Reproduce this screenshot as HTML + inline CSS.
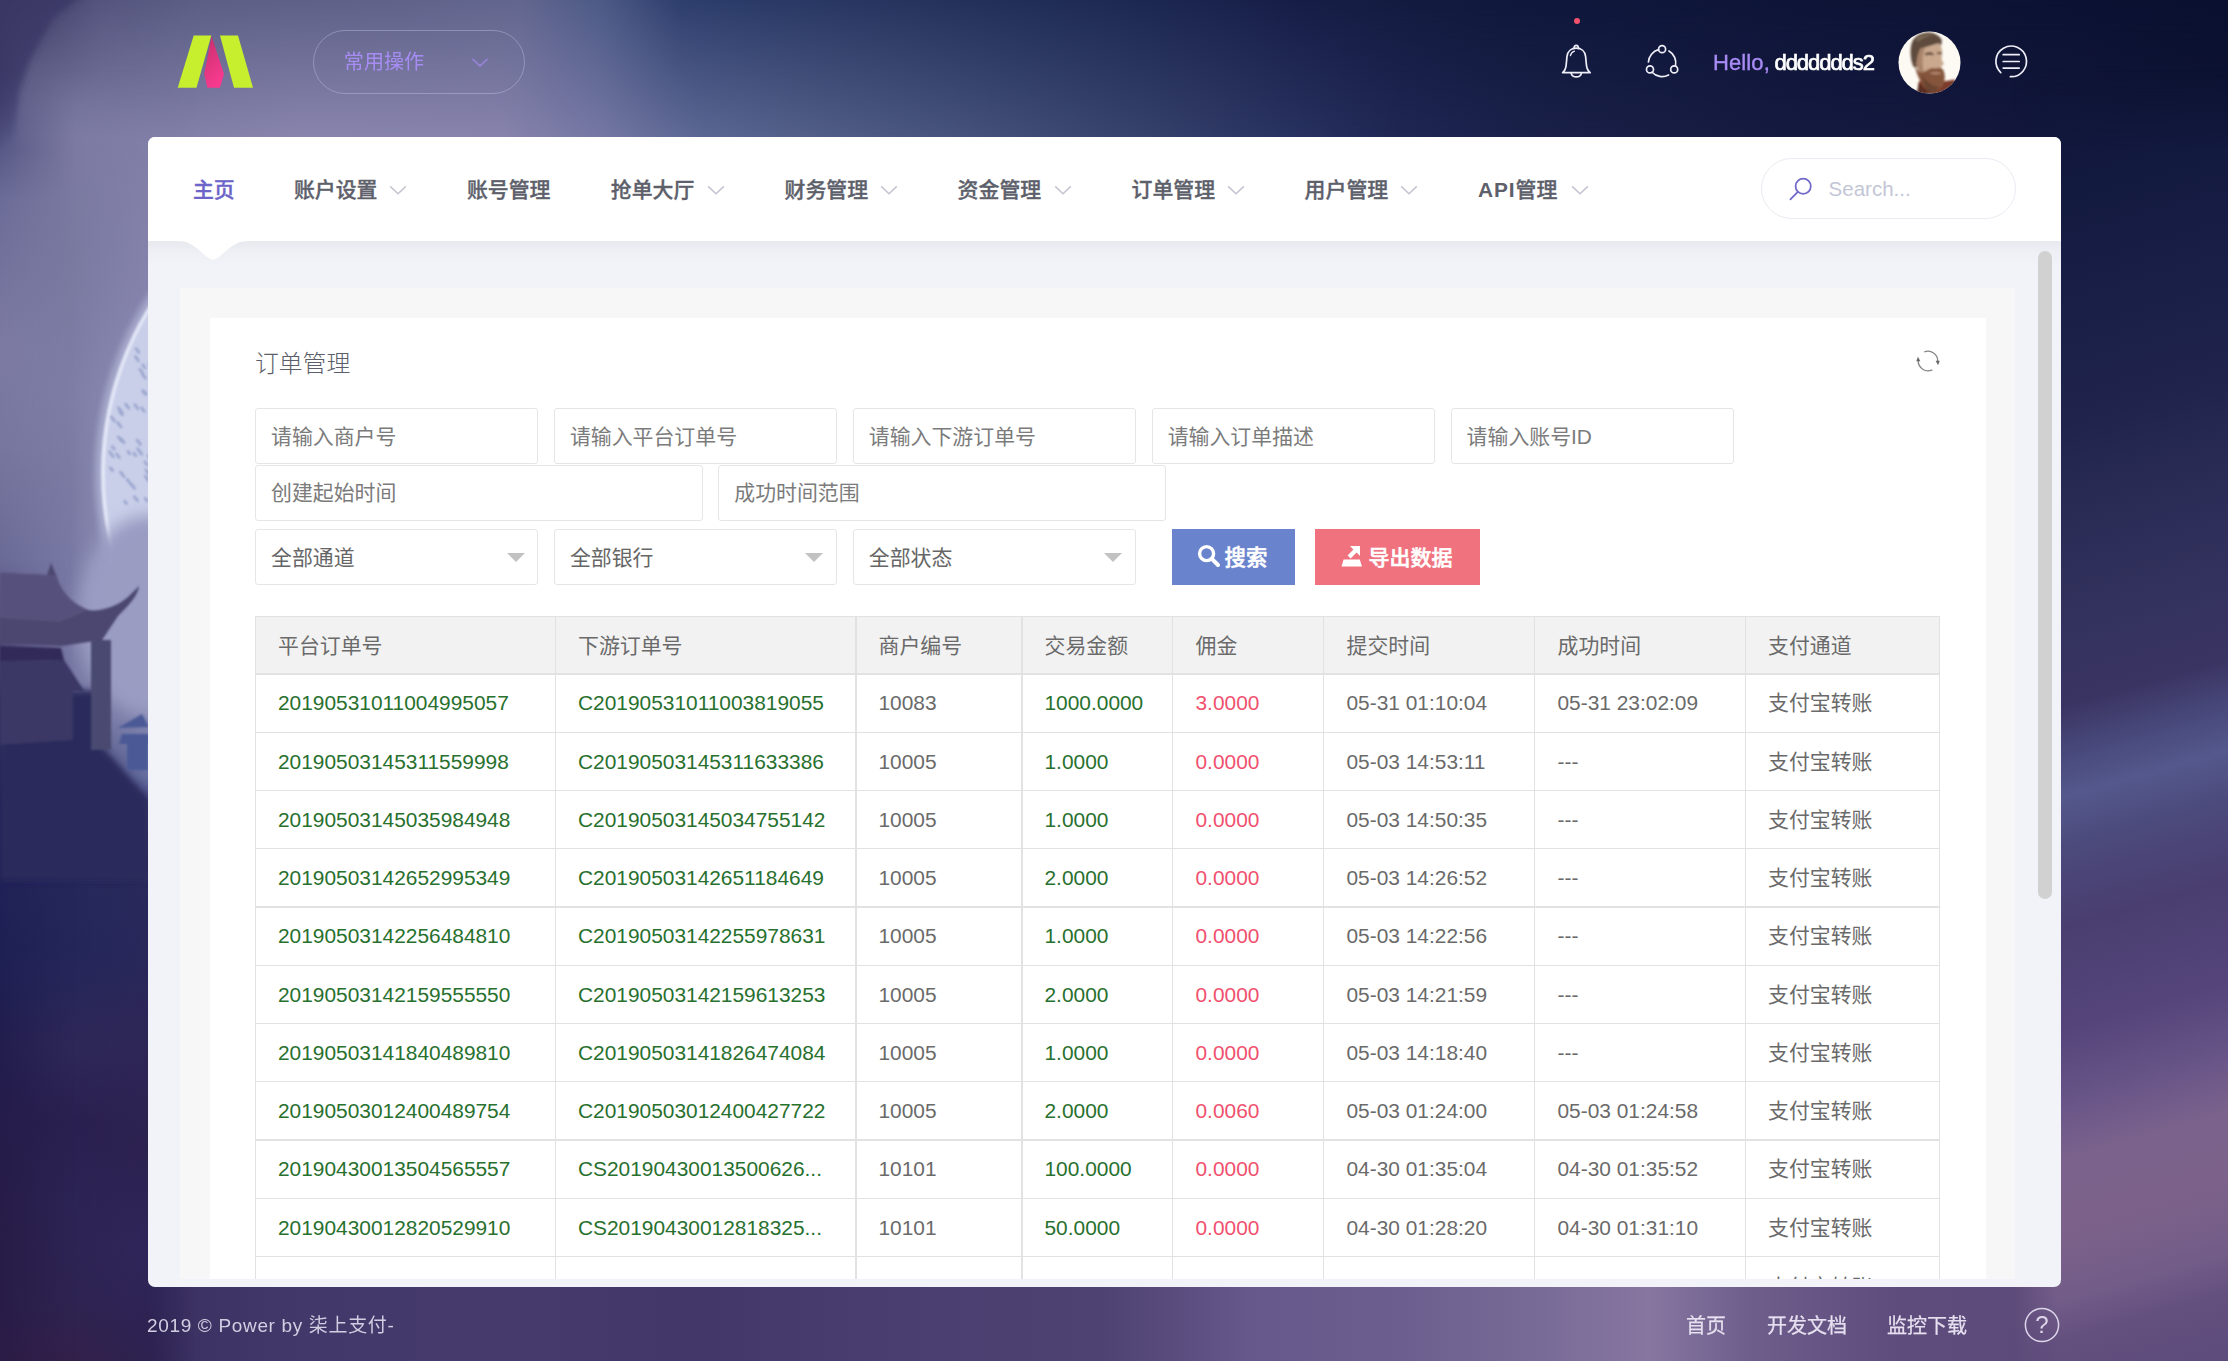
<!DOCTYPE html>
<html lang="zh-CN"><head><meta charset="utf-8"><title>订单管理</title>
<style>
*{box-sizing:border-box;margin:0;padding:0}
html,body{width:2228px;height:1361px;overflow:hidden;background:#1a1c44}
body{position:relative;font-family:"Liberation Sans", "Noto Sans CJK SC", sans-serif;font-size:20.9px;color:#666}
.a{position:absolute;white-space:nowrap}
.t{position:absolute;white-space:nowrap;line-height:30px;height:30px}
#bg{position:absolute;left:0;top:0;width:2228px;height:1361px}
#panel{position:absolute;left:148px;top:137px;width:1913px;height:1150px;background:#f2f3f8;border-radius:7px;overflow:hidden}
#nav{position:absolute;left:0;top:0;width:1913px;height:104px;background:#fff}
#navshadow{position:absolute;left:0;top:104px;width:1913px;height:26px;background:linear-gradient(#e8e9ee,#eff0f5 45%,#f2f3f8)}
.nv{font-weight:500;color:#5d5f6b;font-size:20.9px;-webkit-text-stroke:.35px currentColor}
#frame{position:absolute;left:32px;top:151px;width:1834.5px;height:990.5px;background:#f7f7f8;overflow:hidden}
#card{position:absolute;left:29.5px;top:30px;width:1776px;height:1000px;background:#fff}
.inp{position:absolute;height:56.5px;border:1.5px solid #e6e6e6;background:#fff;border-radius:3px;color:#7b7b7b;line-height:55.3px;padding-left:15px;white-space:nowrap}
.sel{color:#666}
.tri{position:absolute;width:0;height:0;border-left:9px solid transparent;border-right:9px solid transparent;border-top:9px solid #c2c2c2}
.btn{position:absolute;top:391.5px;height:56.5px;color:#fff;font-weight:700;line-height:56.5px;white-space:nowrap}
#tbl{position:absolute;left:106.5px;top:478px;width:1685.5px;height:700px;overflow:hidden}
.hd{position:absolute;left:0;top:0;width:1685px;height:58.2px;background:#f2f2f2}
.hl{position:absolute;left:0;width:1685.2px;height:1.2px;background:#e2e2e2}
.vl{position:absolute;top:0;width:1.2px;height:700px;background:#e2e2e2}
.c{position:absolute;white-space:nowrap;line-height:30px;height:30px;color:#6a6a6a}
.g{color:#28702e}
.r{color:#f0506e}
.ft{color:#d6d3e6;font-size:20px}
</style></head>
<body>
<svg id="bg" width="2228" height="1361" viewBox="0 0 2228 1361"><defs><linearGradient id="tb" gradientUnits="userSpaceOnUse" x1="0" y1="0" x2="2228" y2="0"><stop offset="0.0000" stop-color="#4a4a78"/><stop offset="0.0090" stop-color="#7a7aa2"/><stop offset="0.0673" stop-color="#8280a8"/><stop offset="0.1346" stop-color="#8a86ae"/><stop offset="0.2244" stop-color="#8884ae"/><stop offset="0.2693" stop-color="#7678a4"/><stop offset="0.3142" stop-color="#5c6894"/><stop offset="0.3591" stop-color="#54608a"/><stop offset="0.4264" stop-color="#48547e"/><stop offset="0.4937" stop-color="#3a4670"/><stop offset="0.5386" stop-color="#323c68"/><stop offset="0.5835" stop-color="#283260"/><stop offset="0.6284" stop-color="#1f2753"/><stop offset="0.6957" stop-color="#1a2048"/><stop offset="0.8079" stop-color="#151a40"/><stop offset="0.9250" stop-color="#12173a"/><stop offset="1.0000" stop-color="#0e1434"/></linearGradient><linearGradient id="tt" gradientUnits="userSpaceOnUse" x1="0" y1="0" x2="2228" y2="0"><stop offset="0.0000" stop-color="#34325c"/><stop offset="0.0449" stop-color="#54547e"/><stop offset="0.0898" stop-color="#5c5e86"/><stop offset="0.1795" stop-color="#60628a"/><stop offset="0.2334" stop-color="#62668e"/><stop offset="0.2693" stop-color="#4c5a86"/><stop offset="0.3052" stop-color="#2e3e6c"/><stop offset="0.3411" stop-color="#2a3a66"/><stop offset="0.4039" stop-color="#26345e"/><stop offset="0.4937" stop-color="#1e2a54"/><stop offset="0.5835" stop-color="#161e46"/><stop offset="0.6732" stop-color="#10183c"/><stop offset="1.0000" stop-color="#0a1030"/></linearGradient><linearGradient id="bt" gradientUnits="userSpaceOnUse" x1="0" y1="0" x2="2228" y2="0"><stop offset="0.0000" stop-color="#2c2250"/><stop offset="0.0673" stop-color="#3a3060"/><stop offset="0.1346" stop-color="#42386a"/><stop offset="0.2244" stop-color="#463a6c"/><stop offset="0.3142" stop-color="#43376a"/><stop offset="0.4039" stop-color="#4a3e70"/><stop offset="0.4937" stop-color="#4e4272"/><stop offset="0.5610" stop-color="#66588a"/><stop offset="0.6284" stop-color="#6c5e8e"/><stop offset="0.6957" stop-color="#7a6c98"/><stop offset="0.7406" stop-color="#8676a0"/><stop offset="0.7855" stop-color="#6e5e8c"/><stop offset="0.8528" stop-color="#5e4c7c"/><stop offset="0.9250" stop-color="#5c4a7a"/><stop offset="1.0000" stop-color="#66527e"/></linearGradient><linearGradient id="lr" gradientUnits="userSpaceOnUse" x1="0" y1="0" x2="0" y2="1361"><stop offset="0.0000" stop-color="#5a5c86"/><stop offset="0.1007" stop-color="#807ea6"/><stop offset="0.1470" stop-color="#8280a8"/><stop offset="0.2204" stop-color="#8684ae"/><stop offset="0.4115" stop-color="#a2a2c6"/><stop offset="0.4702" stop-color="#a0a0c4"/><stop offset="0.5143" stop-color="#8c8cb4"/><stop offset="0.5437" stop-color="#7a80ac"/><stop offset="0.5694" stop-color="#6a72a4"/><stop offset="0.5878" stop-color="#464a80"/><stop offset="0.6098" stop-color="#36386a"/><stop offset="0.6319" stop-color="#2a2c5c"/><stop offset="0.6980" stop-color="#28285a"/><stop offset="0.7715" stop-color="#2e2656"/><stop offset="0.8450" stop-color="#2c2250"/><stop offset="0.9184" stop-color="#30265a"/><stop offset="1.0000" stop-color="#2c2250"/></linearGradient><linearGradient id="lm" gradientUnits="userSpaceOnUse" x1="0" y1="0" x2="0" y2="1361"><stop offset="0.0000" stop-color="#4c4c78"/><stop offset="0.0441" stop-color="#70729c"/><stop offset="0.1007" stop-color="#7c7aa2"/><stop offset="0.1837" stop-color="#7a7aa0"/><stop offset="0.2939" stop-color="#7e7ea6"/><stop offset="0.3674" stop-color="#7a7aa4"/><stop offset="0.4188" stop-color="#7a7aa6"/><stop offset="0.4776" stop-color="#7c7ca8"/><stop offset="0.5290" stop-color="#70729e"/><stop offset="0.5511" stop-color="#50527f"/><stop offset="0.5694" stop-color="#30305e"/><stop offset="0.6245" stop-color="#26285a"/><stop offset="0.6980" stop-color="#24265a"/><stop offset="0.7715" stop-color="#2e2858"/><stop offset="0.8229" stop-color="#2a2050"/><stop offset="0.8817" stop-color="#2c2454"/><stop offset="0.9552" stop-color="#2e2452"/><stop offset="1.0000" stop-color="#34204a"/></linearGradient><linearGradient id="ll" gradientUnits="userSpaceOnUse" x1="0" y1="0" x2="0" y2="1361"><stop offset="0.0000" stop-color="#32305a"/><stop offset="0.0441" stop-color="#3c3c68"/><stop offset="0.0882" stop-color="#4c4c7a"/><stop offset="0.1470" stop-color="#6c6c98"/><stop offset="0.2572" stop-color="#7c7aa2"/><stop offset="0.3306" stop-color="#76769e"/><stop offset="0.4115" stop-color="#6a6a96"/><stop offset="0.4409" stop-color="#5a5684"/><stop offset="0.5143" stop-color="#3c3866"/><stop offset="0.5878" stop-color="#24245a"/><stop offset="0.6980" stop-color="#1e2054"/><stop offset="0.8082" stop-color="#241c4a"/><stop offset="1.0000" stop-color="#2a1c46"/></linearGradient><linearGradient id="rr" gradientUnits="userSpaceOnUse" x1="2144" y1="0" x2="2505.5" y2="1265.0"><stop offset="0.0000" stop-color="#0c1436"/><stop offset="0.0735" stop-color="#10173a"/><stop offset="0.1837" stop-color="#171d45"/><stop offset="0.2939" stop-color="#20244c"/><stop offset="0.3674" stop-color="#2a2c56"/><stop offset="0.4409" stop-color="#33325e"/><stop offset="0.4996" stop-color="#3a3462"/><stop offset="0.5290" stop-color="#464678"/><stop offset="0.5658" stop-color="#54588c"/><stop offset="0.6025" stop-color="#4c4a7c"/><stop offset="0.6613" stop-color="#4a3e70"/><stop offset="0.7348" stop-color="#54447a"/><stop offset="0.7935" stop-color="#6a5688"/><stop offset="0.8303" stop-color="#7a628c"/><stop offset="0.8817" stop-color="#7c628a"/><stop offset="0.9331" stop-color="#725c88"/><stop offset="0.9625" stop-color="#64507f"/><stop offset="1.0000" stop-color="#5e4c7c"/></linearGradient><linearGradient id="fv" x1="0" y1="0" x2="0" y2="1"><stop offset="0" stop-color="#fff"/><stop offset="1" stop-color="#000"/></linearGradient><linearGradient id="fh" x1="0" y1="0" x2="1" y2="0"><stop offset="0" stop-color="#fff"/><stop offset="1" stop-color="#000"/></linearGradient><linearGradient id="fh2" x1="0" y1="0" x2="1" y2="0"><stop offset="0" stop-color="#000"/><stop offset="1" stop-color="#fff"/></linearGradient><linearGradient id="fv2" x1="0" y1="0" x2="0" y2="1"><stop offset="0" stop-color="#000"/><stop offset="1" stop-color="#fff"/></linearGradient><mask id="mtop" maskUnits="userSpaceOnUse" x="0" y="0" width="2228" height="150"><rect x="0" y="0" width="2228" height="140" fill="url(#fv)"/></mask><mask id="mll" maskUnits="userSpaceOnUse" x="0" y="0" width="160" height="1361"><rect x="0" y="0" width="75" height="1361" fill="url(#fh)"/></mask><mask id="mlr" maskUnits="userSpaceOnUse" x="0" y="0" width="200" height="1361"><rect x="70" y="0" width="80" height="1361" fill="url(#fh2)"/><rect x="149" y="0" width="51" height="1361" fill="#fff"/></mask><mask id="mside" maskUnits="userSpaceOnUse" x="0" y="0" width="2228" height="1361"><rect x="0" y="70" width="2228" height="80" fill="url(#fv2)"/><rect x="0" y="150" width="2228" height="1211" fill="#fff"/></mask><mask id="mlf" maskUnits="userSpaceOnUse" x="0" y="0" width="200" height="1361"><rect x="0" y="0" width="151" height="1361" fill="#fff"/><rect x="150" y="0" width="45" height="1361" fill="url(#fh)"/></mask><mask id="mrf" maskUnits="userSpaceOnUse" x="2000" y="0" width="228" height="1361"><rect x="2012" y="0" width="45" height="1361" fill="url(#fh2)"/><rect x="2056" y="0" width="172" height="1361" fill="#fff"/></mask><filter id="b1" x="-10%" y="-10%" width="120%" height="120%"><feGaussianBlur stdDeviation="1.2"/></filter><filter id="b3" x="-20%" y="-20%" width="140%" height="140%"><feGaussianBlur stdDeviation="3"/></filter><filter id="b8" x="-30%" y="-30%" width="160%" height="160%"><feGaussianBlur stdDeviation="8"/></filter><filter id="b20" x="-50%" y="-50%" width="200%" height="200%"><feGaussianBlur stdDeviation="20"/></filter></defs>
<rect width="2228" height="1361" fill="#1a1c44"/>
<rect x="0" y="0" width="2228" height="150" fill="url(#tb)"/><rect x="0" y="0" width="2228" height="150" fill="url(#tt)" mask="url(#mtop)"/>
<rect x="0" y="1270" width="2228" height="91" fill="url(#bt)"/>
<path d="M-10 -10 L88 -10 L52 20 L30 60 L20 90 L13 135 L-10 160 Z" fill="#3b3966" opacity=".85" filter="url(#b3)"/>
<g mask="url(#mside)"><g mask="url(#mlf)"><rect x="0" y="0" width="200" height="1361" fill="url(#lm)"/><rect x="0" y="0" width="160" height="1361" fill="url(#ll)" mask="url(#mll)"/><rect x="0" y="0" width="200" height="1361" fill="url(#lr)" mask="url(#mlr)"/><circle cx="418" cy="473" r="323" fill="#c8cce8" opacity=".5" filter="url(#b3)"/><circle cx="418" cy="473" r="317" fill="#e2e6f6" filter="url(#b1)"/><circle cx="421" cy="473" r="316" fill="#c9cfe9" filter="url(#b1)"/><path d="M135.3 356.6 l3.1 4.1 M142.7 364.8 l2.3 3.1 M134.4 496.6 l3.2 4.2 M124.7 501.2 l1.9 2.5 M144.1 391.3 l2.1 2.9 M142.3 373.9 l3.2 4.3 M134.8 404.6 l3.1 4.2 M116.7 453.9 l2.8 3.8 M121.2 438.7 l2.9 3.9 M120.6 472.1 l3.5 4.6 M118.3 436.9 l3.1 4.1 M144.8 461.7 l2.5 3.3 M149.2 363.9 l2.8 3.7 M139.8 369.3 l3.0 4.0 M109.6 451.9 l3.6 4.8 M132.1 485.1 l2.6 3.4 M137.2 440.1 l3.2 4.3 M127.2 479.4 l4.1 5.4 M127.9 451.3 l1.9 2.6 M137.5 448.5 l4.2 5.6 M142.5 390.5 l2.7 3.6 M136.1 348.6 l2.9 3.9 M110.5 467.9 l2.1 2.8 M118.4 407.6 l3.9 5.2 M111.4 416.9 l3.1 4.2 M145.1 476.1 l3.9 5.2 M119.7 411.4 l2.7 3.5 M145.1 498.2 l2.2 2.9 M117.8 422.6 l3.2 4.3 M125.6 404.1 l3.2 4.2 M148.0 455.5 l3.0 4.0 M133.9 453.2 l1.9 2.6 M145.8 469.8 l3.9 5.2 M141.5 407.8 l2.8 3.7 M112.3 446.5 l1.9 2.6" stroke="#8e9ac6" stroke-width="2.6" stroke-linecap="round" fill="none" opacity=".8" filter="url(#b1)"/><ellipse cx="150" cy="615" rx="72" ry="100" fill="#9a9cc2" filter="url(#b8)"/><path d="M0 692 L98 690 L104 748 L150 800 L150 880 L0 880 Z" fill="#2a2a5c" filter="url(#b3)"/><g filter="url(#b1)"><path d="M0 573 L47 575 L51 563 L56 575 C60 590 70 603 88 610 C100 612 118 606 128 597 L139 586 C138 596 128 606 118 616 L102 640 L61 646 L0 643 Z" fill="#4b466f"/><path d="M0 573 L47 575 L56 575 C60 590 70 603 88 610 L60 622 L0 618 Z" fill="#57517c"/><rect x="91" y="640" width="20" height="110" fill="#494871"/><path d="M0 661 L64 660 L85 692 L73 691 L73 740 L0 745 Z" fill="#3b3865"/><path d="M0 646 L61 648 L64 660 L0 661 Z" fill="#302c58"/><path d="M142 714 L149 727 L118 728 Z M122 734 L149 734 L149 744 L119 744 Z M127 744 L148 744 L148 770 L127 770 Z" fill="#4c5a96"/></g></g><rect x="2010" y="0" width="218" height="1361" fill="url(#rr)" mask="url(#mrf)"/></g>
</svg>
<svg class="a" style="left:176px;top:33px" width="80" height="58" viewBox="176 33 80 58">
<defs><linearGradient id="lgp" x1="0" y1="0" x2="0.35" y2="1"><stop offset="0" stop-color="#c62f6c"/><stop offset="1" stop-color="#f63a8e"/></linearGradient></defs>
<polygon points="193.7,35.4 211.3,35.4 196.5,87.8 177.7,87.8" fill="#c7ef2e"/>
<polygon points="220,35.4 238,35.4 253,87.8 234,87.8" fill="#c7ef2e"/>
<path d="M211.6 36.2 L204.2 74 L207.4 87.8 L220 87.8 L224 74 Z" fill="url(#lgp)"/>
</svg>
<div class="a" style="left:312.5px;top:30px;width:212px;height:64px;border:1.5px solid rgba(214,210,244,.36);border-radius:32px"></div>
<div class="t" style="left:343.8px;top:47px;font-size:20.1px;color:#a78df3">常用操作</div>
<svg class="a" style="left:470px;top:55px" width="20" height="14" viewBox="0 0 20 14"><path d="M2.5 4 L10 11 L17.5 4" fill="none" stroke="#9a86e0" stroke-width="1.6"/></svg>
<div class="a" style="left:1574.3px;top:18px;width:6px;height:6px;border-radius:3px;background:#f4516c"></div>
<svg class="a" style="left:1560px;top:43px" width="34" height="37" viewBox="0 0 34 37">
<g fill="none" stroke="#eeeef8" stroke-width="1.7" stroke-linecap="round" stroke-linejoin="round">
<path d="M2.6 29.6 C5.2 27.4 6 24.6 6.2 21.6 L7 13.4 C7.6 8.2 11.4 5.2 16.3 5.2 C21.2 5.2 25 8.2 25.6 13.4 L26.4 21.6 C26.6 24.6 27.4 27.4 30.2 29.6 Z"/>
<path d="M11.2 30.4 C12.6 35 20 35 21.4 30.4"/>
<path d="M14 5.4 C14 1.4 18.4 1.4 18.4 5.4"/>
<path d="M10.4 12.6 C11 10.2 12.4 8.8 14.4 8.2" stroke-width="1.3"/>
</g></svg>
<svg class="a" style="left:1644px;top:43px" width="37" height="37" viewBox="0 0 37 37">
<g fill="none" stroke="#eeeef8" stroke-width="1.7" stroke-linecap="round">
<circle cx="18.1" cy="6.2" r="3.5"/><circle cx="6" cy="26.4" r="3.5"/><circle cx="30.2" cy="26.4" r="3.5"/>
<path d="M14.55 6.67 A13.7 13.7 0 0 0 4.43 18.94"/>
<path d="M8.08 29.24 A13.7 13.7 0 0 0 24.53 32"/>
<path d="M31.45 22.98 A13.7 13.7 0 0 0 24.95 8.04"/>
</g></svg>
<div class="t" style="left:1713px;top:48px;font-size:22px;color:#a98bf5;letter-spacing:0.1px;-webkit-text-stroke:.35px #a98bf5">Hello,</div>
<div class="t" style="left:1774.5px;top:48px;font-size:22px;color:#fff;letter-spacing:-1.05px;-webkit-text-stroke:.7px #fff">ddddddds2</div>
<svg class="a" style="left:1897.5px;top:30.5px" width="63" height="63" viewBox="0 0 63 63">
<defs><clipPath id="avc"><circle cx="31.5" cy="31.6" r="31"/></clipPath><filter id="avb" x="-10%" y="-10%" width="120%" height="120%"><feGaussianBlur stdDeviation="0.9"/></filter></defs>
<g clip-path="url(#avc)">
<rect width="63" height="63" fill="#fdfaf3"/>
<g filter="url(#avb)">
<path d="M19 63 L21 50 L40 52 L48 50 L56.5 48.5 L60 55 L58 63 Z" fill="#7c3a2a"/>
<path d="M19 63 L20.6 52 L30 60 L34 63 Z" fill="#5a2e24"/>
<path d="M15.5 36 C12 28 11.6 16 14.5 10 C18 3.6 26 1 31 1.6 C37 2 42 5 44 9.6 L43 15 L40.5 12.6 L23 18 L20.4 24 L19 36 Z" fill="#5e4c3c"/>
<path d="M18 8 C22 4 30 2.6 36 4.6 C30 5 24 7 20 11 Z" fill="#7d6a56"/>
<path d="M20 24 L22.4 17.8 L40.4 12.6 C43.4 15 44.6 19 44 23 L43.6 29 L46 32.4 L43 36 L42.6 44 L22 44 L18.4 33 Z" fill="#caa88e"/>
<path d="M20 24 L22.4 17.8 L27 17 C24 24 24 32 26 42 L21 42 L18.4 33 Z" fill="#a9836a"/>
<path d="M27 22.6 C30 21 33 21 35.6 22.4 L35.4 24.4 C33 23.4 30 23.4 27.2 24.6 Z" fill="#5b4436"/>
<path d="M39 21.6 C40.6 20.8 42.6 20.8 44 21.6 L43.8 23.2 C42.4 22.8 40.8 22.8 39.2 23.4 Z" fill="#5b4436"/>
<path d="M15.6 31 C17 35 18.6 38 21 41 C24 42 27 41 30 38.6 C33 36.6 36 36.6 38 37.6 C40 36.4 42.6 36.4 44 37.6 C46.6 40 47.6 46 46 52 C44 58 38 62 32 61.4 C26 58 19.6 48 15.6 31 Z" fill="#85553a"/><path d="M31 42 C35 40.6 40 40.6 43.6 42 C43 43.6 35 44 31 42 Z" fill="#b58a74"/>
<path d="M24 44 C28 50 34 56 42 56 C38 61 33 62 31 61 C27 57 25 51 24 44 Z" fill="#6b4430"/>
</g></g></svg>
<svg class="a" style="left:1993px;top:43px" width="37" height="37" viewBox="0 0 37 37">
<g fill="none" stroke="#eeeef8" stroke-width="1.7" stroke-linecap="round">
<path d="M7.77 29.59 A15.3 15.3 0 1 1 17.4 33.68"/>
<path d="M10.2 11.7 H26.2"/><path d="M10.2 18.5 H26.2"/><path d="M10.2 25.1 H26.2"/>
</g></svg>
<div id="panel">
<div id="nav"></div><div id="navshadow"></div>
<svg class="a" style="left:28px;top:103px" width="74" height="22" viewBox="0 0 74 22"><path d="M0 0 H74 V1 C62 1 58 4.4 51 10 C44 15.6 41.6 19.4 37 19.4 C32.4 19.4 30 15.6 23 10 C16 4.4 12 1 0 1 Z" fill="#fff"/></svg>
<div class="t nv" style="left:44.9px;top:38.4px;color:#6c64c8">主页</div>
<div class="t nv" style="left:145.9px;top:38.4px">账户设置</div>
<svg class="a" style="left:241.4px;top:47.6px" width="18" height="11" viewBox="0 0 18 11"><path d="M1.2 1.4 L9 8.8 L16.8 1.4" fill="none" stroke="#c4c5d0" stroke-width="1.5"/></svg>
<div class="t nv" style="left:318.9px;top:38.4px">账号管理</div>
<div class="t nv" style="left:462.8px;top:38.4px">抢单大厅</div>
<svg class="a" style="left:558.6px;top:47.6px" width="18" height="11" viewBox="0 0 18 11"><path d="M1.2 1.4 L9 8.8 L16.8 1.4" fill="none" stroke="#c4c5d0" stroke-width="1.5"/></svg>
<div class="t nv" style="left:636.5px;top:38.4px">财务管理</div>
<svg class="a" style="left:732.0px;top:47.6px" width="18" height="11" viewBox="0 0 18 11"><path d="M1.2 1.4 L9 8.8 L16.8 1.4" fill="none" stroke="#c4c5d0" stroke-width="1.5"/></svg>
<div class="t nv" style="left:809.6px;top:38.4px">资金管理</div>
<svg class="a" style="left:906.0px;top:47.6px" width="18" height="11" viewBox="0 0 18 11"><path d="M1.2 1.4 L9 8.8 L16.8 1.4" fill="none" stroke="#c4c5d0" stroke-width="1.5"/></svg>
<div class="t nv" style="left:983.5px;top:38.4px">订单管理</div>
<svg class="a" style="left:1078.5px;top:47.6px" width="18" height="11" viewBox="0 0 18 11"><path d="M1.2 1.4 L9 8.8 L16.8 1.4" fill="none" stroke="#c4c5d0" stroke-width="1.5"/></svg>
<div class="t nv" style="left:1156.6px;top:38.4px">用户管理</div>
<svg class="a" style="left:1251.5px;top:47.6px" width="18" height="11" viewBox="0 0 18 11"><path d="M1.2 1.4 L9 8.8 L16.8 1.4" fill="none" stroke="#c4c5d0" stroke-width="1.5"/></svg>
<div class="t nv" style="left:1330.0px;top:38.4px"><span style="font-weight:700;letter-spacing:.9px;-webkit-text-stroke:0">API</span>管理</div>
<svg class="a" style="left:1422.5px;top:47.6px" width="18" height="11" viewBox="0 0 18 11"><path d="M1.2 1.4 L9 8.8 L16.8 1.4" fill="none" stroke="#c4c5d0" stroke-width="1.5"/></svg>
<div class="a" style="left:1613.0px;top:21.0px;width:255px;height:61px;border:1.8px solid #e9ebf1;border-radius:31px;background:#fff"></div>
<svg class="a" style="left:1639.5px;top:38.5px" width="26" height="26" viewBox="0 0 26 26"><g fill="none" stroke="#716aca" stroke-width="1.8" stroke-linecap="round"><circle cx="15.2" cy="10.2" r="7.6"/><path d="M9.8 15.8 L2.4 23.4"/></g></svg>
<div class="t" style="left:1680.6px;top:36.5px;font-size:20.5px;color:#c3c6d6">Search...</div>
<div class="a" style="left:1889.6px;top:113.5px;width:14.5px;height:648px;border-radius:7px;background:#d0d1d0"></div>
<div id="frame"><div id="card">
<div class="t" style="left:45.5px;top:30.6px;font-size:23.8px;color:#5c5e69;font-weight:300">订单管理</div>
<svg class="a" style="left:1705.9px;top:30.2px" width="26" height="26" viewBox="0 0 26 26"><g fill="none" stroke="#858585" stroke-width="1.3"><path d="M9.17 3.98 A9.8 9.8 0 0 1 22.76 13.4"/><path d="M17.3 21.8 A9.8 9.8 0 0 1 3.24 12.6"/></g><path d="M20.7 12.8 L24.7 12.8 L23 17.2 Z" fill="#666"/><path d="M1.3 13.2 L5.3 13.2 L3 8.8 Z" fill="#666"/></svg>
<div class="inp" style="left:45.5px;top:89.7px;width:283px">请输入商户号</div>
<div class="inp" style="left:344.4px;top:89.7px;width:283px">请输入平台订单号</div>
<div class="inp" style="left:643.3px;top:89.7px;width:283px">请输入下游订单号</div>
<div class="inp" style="left:942.2px;top:89.7px;width:283px">请输入订单描述</div>
<div class="inp" style="left:1241.1px;top:89.7px;width:283px">请输入账号ID</div>
<div class="inp" style="left:45.5px;top:147.2px;width:447.5px;height:55.8px;line-height:54.6px">创建起始时间</div>
<div class="inp" style="left:508.8px;top:147.2px;width:447.5px;height:55.8px;line-height:54.6px">成功时间范围</div>
<div class="inp sel" style="left:45.5px;top:210.7px;width:283px">全部通道</div>
<div class="tri" style="left:297.0px;top:234.8px"></div>
<div class="inp sel" style="left:344.4px;top:210.7px;width:283px">全部银行</div>
<div class="tri" style="left:595.9px;top:234.8px"></div>
<div class="inp sel" style="left:643.3px;top:210.7px;width:283px">全部状态</div>
<div class="tri" style="left:894.8px;top:234.8px"></div>
<div class="btn" style="left:962.7px;top:210.7px;width:122.5px;background:#6983cd"></div>
<svg class="a" style="left:987.9px;top:226.0px" width="24" height="24" viewBox="0 0 24 24"><circle cx="9.6" cy="9.6" r="7" fill="none" stroke="#fff" stroke-width="3.4"/><path d="M14.6 14.6 L21 21" stroke="#fff" stroke-width="4" stroke-linecap="round"/></svg>
<div class="t" style="left:1015.1px;top:225.4px;font-size:21.4px;color:#fff;font-weight:500;-webkit-text-stroke:.5px #fff">搜索</div>
<div class="btn" style="left:1105.9px;top:210.7px;width:164.5px;background:#f0727f"></div>
<svg class="a" style="left:1131.5px;top:226.5px" width="22" height="23" viewBox="0 0 22 23"><path d="M0.5 21.5 L2.6 14.6 L18.8 14.6 L21 21.5 Z" fill="#fff"/><path d="M9 1 L19 1 L19 11 L15.6 7.6 L9.6 13.4 L6.6 10.4 L12.4 4.4 Z" fill="#fff"/></svg>
<div class="t" style="left:1159.1px;top:225.0px;font-size:21px;color:#fff;font-weight:500;-webkit-text-stroke:.5px #fff">导出数据</div>
<div id="tbl" style="left:45.4px;top:297.8px">
<div class="hd"></div>
<div class="hl" style="top:0.00px"></div>
<div class="hl" style="top:57.60px"></div>
<div class="hl" style="top:115.85px"></div>
<div class="hl" style="top:174.10px"></div>
<div class="hl" style="top:232.35px"></div>
<div class="hl" style="top:290.60px"></div>
<div class="hl" style="top:348.85px"></div>
<div class="hl" style="top:407.10px"></div>
<div class="hl" style="top:465.35px"></div>
<div class="hl" style="top:523.60px"></div>
<div class="hl" style="top:581.85px"></div>
<div class="hl" style="top:640.10px"></div>
<div class="hl" style="top:698.35px"></div>
<div class="vl" style="left:0.00px"></div>
<div class="vl" style="left:300.00px"></div>
<div class="vl" style="left:600.50px"></div>
<div class="vl" style="left:766.50px"></div>
<div class="vl" style="left:917.20px"></div>
<div class="vl" style="left:1068.10px"></div>
<div class="vl" style="left:1278.90px"></div>
<div class="vl" style="left:1489.80px"></div>
<div class="vl" style="left:1684.00px"></div>
<div class="c" style="left:23.1px;top:14.9px">平台订单号</div>
<div class="c" style="left:323.1px;top:14.9px">下游订单号</div>
<div class="c" style="left:623.6px;top:14.9px">商户编号</div>
<div class="c" style="left:789.6px;top:14.9px">交易金额</div>
<div class="c" style="left:940.6px;top:14.9px">佣金</div>
<div class="c" style="left:1091.6px;top:14.9px">提交时间</div>
<div class="c" style="left:1302.6px;top:14.9px">成功时间</div>
<div class="c" style="left:1513.1px;top:14.9px">支付通道</div>
<div class="c g" style="left:23.1px;top:72.7px">20190531011004995057</div>
<div class="c g" style="left:323.1px;top:72.7px">C20190531011003819055</div>
<div class="c" style="left:623.6px;top:72.7px">10083</div>
<div class="c g" style="left:789.6px;top:72.7px">1000.0000</div>
<div class="c r" style="left:940.6px;top:72.7px">3.0000</div>
<div class="c" style="left:1091.6px;top:72.7px">05-31 01:10:04</div>
<div class="c" style="left:1302.6px;top:72.7px">05-31 23:02:09</div>
<div class="c" style="left:1513.1px;top:72.7px">支付宝转账</div>
<div class="c g" style="left:23.1px;top:131.0px">20190503145311559998</div>
<div class="c g" style="left:323.1px;top:131.0px">C20190503145311633386</div>
<div class="c" style="left:623.6px;top:131.0px">10005</div>
<div class="c g" style="left:789.6px;top:131.0px">1.0000</div>
<div class="c r" style="left:940.6px;top:131.0px">0.0000</div>
<div class="c" style="left:1091.6px;top:131.0px">05-03 14:53:11</div>
<div class="c" style="left:1302.6px;top:131.0px">---</div>
<div class="c" style="left:1513.1px;top:131.0px">支付宝转账</div>
<div class="c g" style="left:23.1px;top:189.2px">20190503145035984948</div>
<div class="c g" style="left:323.1px;top:189.2px">C20190503145034755142</div>
<div class="c" style="left:623.6px;top:189.2px">10005</div>
<div class="c g" style="left:789.6px;top:189.2px">1.0000</div>
<div class="c r" style="left:940.6px;top:189.2px">0.0000</div>
<div class="c" style="left:1091.6px;top:189.2px">05-03 14:50:35</div>
<div class="c" style="left:1302.6px;top:189.2px">---</div>
<div class="c" style="left:1513.1px;top:189.2px">支付宝转账</div>
<div class="c g" style="left:23.1px;top:247.5px">20190503142652995349</div>
<div class="c g" style="left:323.1px;top:247.5px">C20190503142651184649</div>
<div class="c" style="left:623.6px;top:247.5px">10005</div>
<div class="c g" style="left:789.6px;top:247.5px">2.0000</div>
<div class="c r" style="left:940.6px;top:247.5px">0.0000</div>
<div class="c" style="left:1091.6px;top:247.5px">05-03 14:26:52</div>
<div class="c" style="left:1302.6px;top:247.5px">---</div>
<div class="c" style="left:1513.1px;top:247.5px">支付宝转账</div>
<div class="c g" style="left:23.1px;top:305.7px">20190503142256484810</div>
<div class="c g" style="left:323.1px;top:305.7px">C20190503142255978631</div>
<div class="c" style="left:623.6px;top:305.7px">10005</div>
<div class="c g" style="left:789.6px;top:305.7px">1.0000</div>
<div class="c r" style="left:940.6px;top:305.7px">0.0000</div>
<div class="c" style="left:1091.6px;top:305.7px">05-03 14:22:56</div>
<div class="c" style="left:1302.6px;top:305.7px">---</div>
<div class="c" style="left:1513.1px;top:305.7px">支付宝转账</div>
<div class="c g" style="left:23.1px;top:364.0px">20190503142159555550</div>
<div class="c g" style="left:323.1px;top:364.0px">C20190503142159613253</div>
<div class="c" style="left:623.6px;top:364.0px">10005</div>
<div class="c g" style="left:789.6px;top:364.0px">2.0000</div>
<div class="c r" style="left:940.6px;top:364.0px">0.0000</div>
<div class="c" style="left:1091.6px;top:364.0px">05-03 14:21:59</div>
<div class="c" style="left:1302.6px;top:364.0px">---</div>
<div class="c" style="left:1513.1px;top:364.0px">支付宝转账</div>
<div class="c g" style="left:23.1px;top:422.2px">20190503141840489810</div>
<div class="c g" style="left:323.1px;top:422.2px">C20190503141826474084</div>
<div class="c" style="left:623.6px;top:422.2px">10005</div>
<div class="c g" style="left:789.6px;top:422.2px">1.0000</div>
<div class="c r" style="left:940.6px;top:422.2px">0.0000</div>
<div class="c" style="left:1091.6px;top:422.2px">05-03 14:18:40</div>
<div class="c" style="left:1302.6px;top:422.2px">---</div>
<div class="c" style="left:1513.1px;top:422.2px">支付宝转账</div>
<div class="c g" style="left:23.1px;top:480.5px">20190503012400489754</div>
<div class="c g" style="left:323.1px;top:480.5px">C20190503012400427722</div>
<div class="c" style="left:623.6px;top:480.5px">10005</div>
<div class="c g" style="left:789.6px;top:480.5px">2.0000</div>
<div class="c r" style="left:940.6px;top:480.5px">0.0060</div>
<div class="c" style="left:1091.6px;top:480.5px">05-03 01:24:00</div>
<div class="c" style="left:1302.6px;top:480.5px">05-03 01:24:58</div>
<div class="c" style="left:1513.1px;top:480.5px">支付宝转账</div>
<div class="c g" style="left:23.1px;top:538.7px">20190430013504565557</div>
<div class="c g" style="left:323.1px;top:538.7px">CS20190430013500626...</div>
<div class="c" style="left:623.6px;top:538.7px">10101</div>
<div class="c g" style="left:789.6px;top:538.7px">100.0000</div>
<div class="c r" style="left:940.6px;top:538.7px">0.0000</div>
<div class="c" style="left:1091.6px;top:538.7px">04-30 01:35:04</div>
<div class="c" style="left:1302.6px;top:538.7px">04-30 01:35:52</div>
<div class="c" style="left:1513.1px;top:538.7px">支付宝转账</div>
<div class="c g" style="left:23.1px;top:597.0px">20190430012820529910</div>
<div class="c g" style="left:323.1px;top:597.0px">CS20190430012818325...</div>
<div class="c" style="left:623.6px;top:597.0px">10101</div>
<div class="c g" style="left:789.6px;top:597.0px">50.0000</div>
<div class="c r" style="left:940.6px;top:597.0px">0.0000</div>
<div class="c" style="left:1091.6px;top:597.0px">04-30 01:28:20</div>
<div class="c" style="left:1302.6px;top:597.0px">04-30 01:31:10</div>
<div class="c" style="left:1513.1px;top:597.0px">支付宝转账</div>
<div class="c" style="left:1513.1px;top:656.7px">支付宝转账</div>
</div>
</div></div>
</div>
<div id="fl" class="t ft" style="left:147px;top:1310.5px;font-size:19px;letter-spacing:0.66px;color:#d2cee2">2019 © Power by 柒上支付-</div>
<div class="t ft" style="left:1686px;top:1311px;font-weight:400;color:#e6e0f0;-webkit-text-stroke:.25px #e6e0f0">首页</div>
<div class="t ft" style="left:1767px;top:1311px;font-weight:400;color:#e6e0f0;-webkit-text-stroke:.25px #e6e0f0">开发文档</div>
<div class="t ft" style="left:1887px;top:1311px;font-weight:400;color:#e6e0f0;-webkit-text-stroke:.25px #e6e0f0">监控下载</div>
<svg class="a" style="left:2023px;top:1306px" width="38" height="38" viewBox="0 0 38 38"><circle cx="19" cy="19" r="16.6" fill="none" stroke="#ddd6ea" stroke-width="1.5"/><text x="19" y="27" text-anchor="middle" font-family="Liberation Sans, sans-serif" font-size="24" fill="#ddd6ea">?</text></svg>
</body></html>
